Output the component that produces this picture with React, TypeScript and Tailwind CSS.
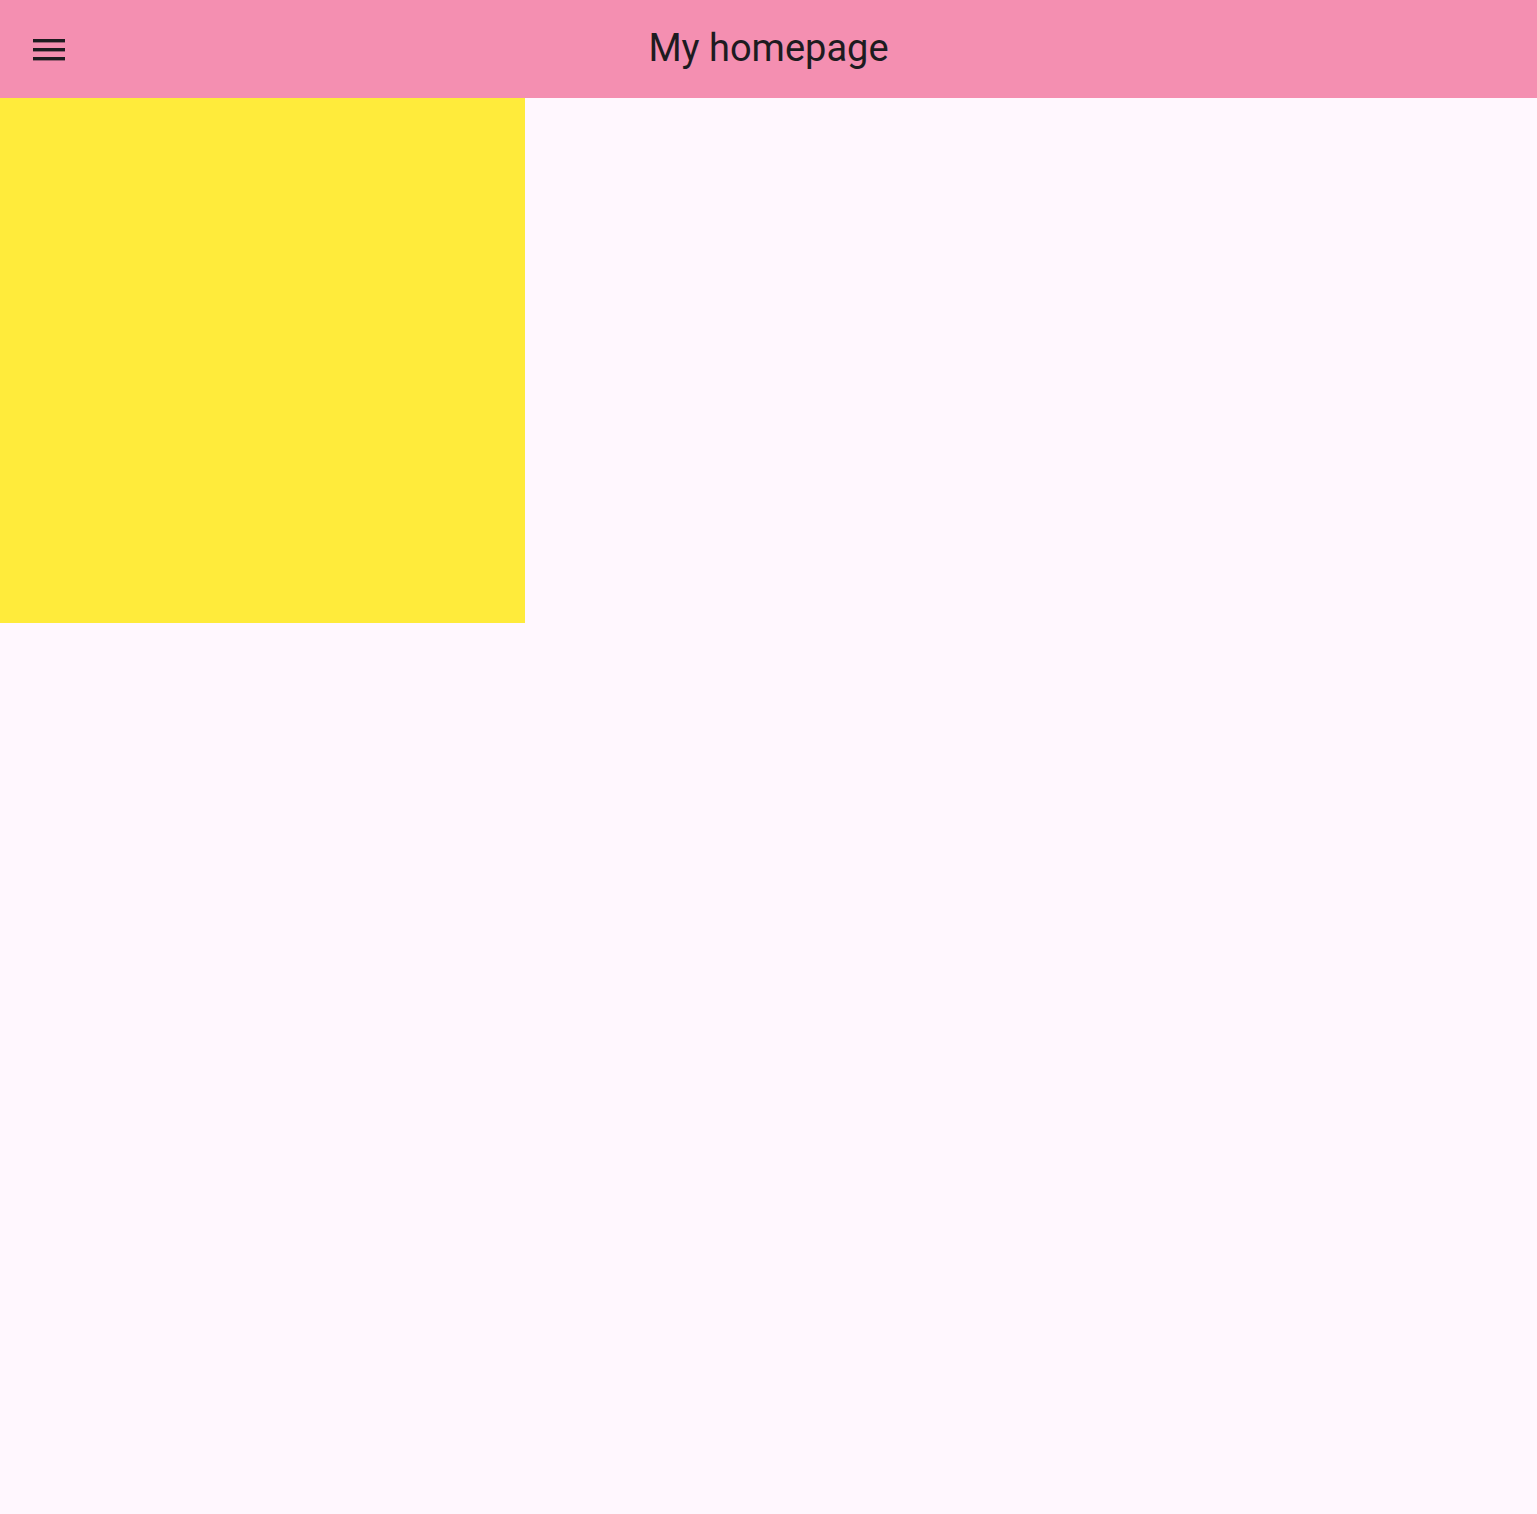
import React from 'react';

const MenuIcon = () => (
  <svg width="32" height="22" viewBox="0 0 32 22" fill="#1d1b20">
    <rect x="0" y="0" width="32" height="3.4" />
    <rect x="0" y="9" width="32" height="3.4" />
    <rect x="0" y="18" width="32" height="3.4" />
  </svg>
);

export default function App() {
  return (
    <div className="min-h-[1514px] bg-[#fff7fe] flex flex-col" style={{ fontFamily: 'Roboto, sans-serif' }}>
      <header className="h-[98px] bg-[#f48fb1] flex items-center relative">
        <button className="ml-[33px] mt-[1px] flex items-center">
          <MenuIcon />
        </button>
        <h1 className="absolute left-0 right-0 -mt-[3px] text-center text-[38px] leading-none text-[#1d1b20] pointer-events-none">
          My homepage
        </h1>
      </header>
      <div className="w-[525px] h-[525px] bg-[#ffeb3b]" />
    </div>
  );
}
